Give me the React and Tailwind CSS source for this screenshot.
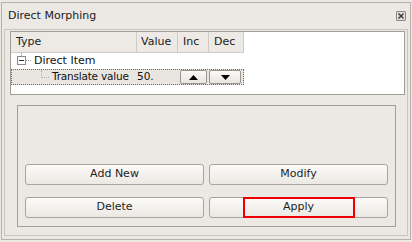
import React from 'react';

const font = { fontFamily: '"DejaVu Sans", "Liberation Sans", sans-serif' };

const PushButton = ({ children }) => (
  <button className="flex-1 h-[21px] flex items-center justify-center rounded-[3px] border border-[#a8a49e] bg-gradient-to-b from-[#fbfaf8] to-[#ece9e4] text-[11px] text-[#1e1e1e]">
    {children}
  </button>
);

const ArrowButton = ({ up, width }) => (
  <div
    className={`h-[14px] ${width} flex items-center justify-center rounded-[2px] border border-[#9a968f] bg-gradient-to-b from-[#fbfaf8] to-[#e9e6e1]`}
  >
    <svg width="9" height="5" viewBox="0 0 9 5">
      {up ? <path d="M0 5 L4.5 0 L9 5 Z" fill="#000" /> : <path d="M0 0 L9 0 L4.5 5 Z" fill="#000" />}
    </svg>
  </div>
);

export default function App() {
  return (
    <div className="w-[412px] h-[242px] bg-[#ece9e5] pt-[2px] px-[1px] pb-[2px]" style={font}>
      <div className="h-full border border-[#b5b1ab] flex flex-col">
        {/* title bar */}
        <div className="h-[26px] flex items-center justify-between pl-[6px] pr-[4px]">
          <span className="text-[11px] text-[#1a1a1a]">Direct Morphing</span>
          <div className="w-[10px] h-[10px] border border-[#8a8680] rounded-[1px] flex items-center justify-center bg-[#e2dfda]">
            <svg width="6" height="6" viewBox="0 0 6 6">
              <path d="M0.5 0.5 L5.5 5.5 M5.5 0.5 L0.5 5.5" stroke="#333" strokeWidth="1.4" />
            </svg>
          </div>
        </div>

        {/* content frame */}
        <div className="flex-1 mx-[2px] mb-[3px] border border-[#c9c5bf] flex flex-col pt-[1px] pl-[5px] pr-[2px]">
          {/* tree widget */}
          <div className="h-[64px] border border-[#a19d97] bg-white flex flex-col">
            <div className="flex h-[21px] text-[11px] text-[#222]">
              <div className="w-[126px] bg-[#edeae5] border-r border-b border-[#cfcbc5] pl-[5px] flex items-center">Type</div>
              <div className="w-[41px] bg-[#edeae5] border-r border-b border-[#cfcbc5] pl-[4px] flex items-center">Value</div>
              <div className="w-[31px] bg-[#edeae5] border-r border-b border-[#cfcbc5] pl-[5px] flex items-center">Inc</div>
              <div className="w-[35px] bg-[#edeae5] border-r border-b border-[#cfcbc5] pl-[5px] flex items-center">Dec</div>
            </div>
            <div className="h-[16px] flex items-center text-[11px] text-[#111]">
              <div className="w-[22px] h-full flex flex-col items-start pl-[6px]">
                <div className="ml-[4px] h-[3px] border-l border-dotted border-[#9a968f]" />
                <div className="flex items-center">
                  <div className="w-[9px] h-[9px] border border-[#8e8a84] bg-white flex items-center justify-center">
                    <div className="w-[5px] h-[1px] bg-[#333]" />
                  </div>
                  <div className="w-[5px] border-t border-dotted border-[#9a968f]" />
                </div>
              </div>
              <span className="pl-[1px]">Direct Item</span>
            </div>
            <div className="h-[16px] w-[233px] flex items-center text-[10.5px] text-[#111] bg-[#e9e6e2] border border-dotted border-[#6d6a66]">
              <div className="w-[40px] h-full flex items-start">
                <div className="ml-[29px] h-[8px] w-[8px] border-l border-b border-dotted border-[#b3afa9]" />
              </div>
              <span className="w-[85px] whitespace-nowrap tracking-[-0.2px]">Translate value</span>
              <span className="w-[43px]">50.</span>
              <div className="flex gap-[2px]">
                <ArrowButton up width="w-[27px]" />
                <ArrowButton width="w-[32px]" />
              </div>
            </div>
          </div>

          {/* group box */}
          <div className="mt-[10px] ml-[7px] mr-[9px] h-[122px] border border-[#a29e98] flex flex-col justify-end px-[7px] pb-[8px] gap-[12px]">
            <div className="flex gap-[5px]">
              <PushButton>Add New</PushButton>
              <PushButton>Modify</PushButton>
            </div>
            <div className="flex gap-[5px]">
              <PushButton>Delete</PushButton>
              <PushButton>
                <span className="w-[112px] h-[21px] border-2 border-[#ee0000] flex items-center justify-center">Apply</span>
              </PushButton>
            </div>
          </div>
        </div>
      </div>
    </div>
  );
}
